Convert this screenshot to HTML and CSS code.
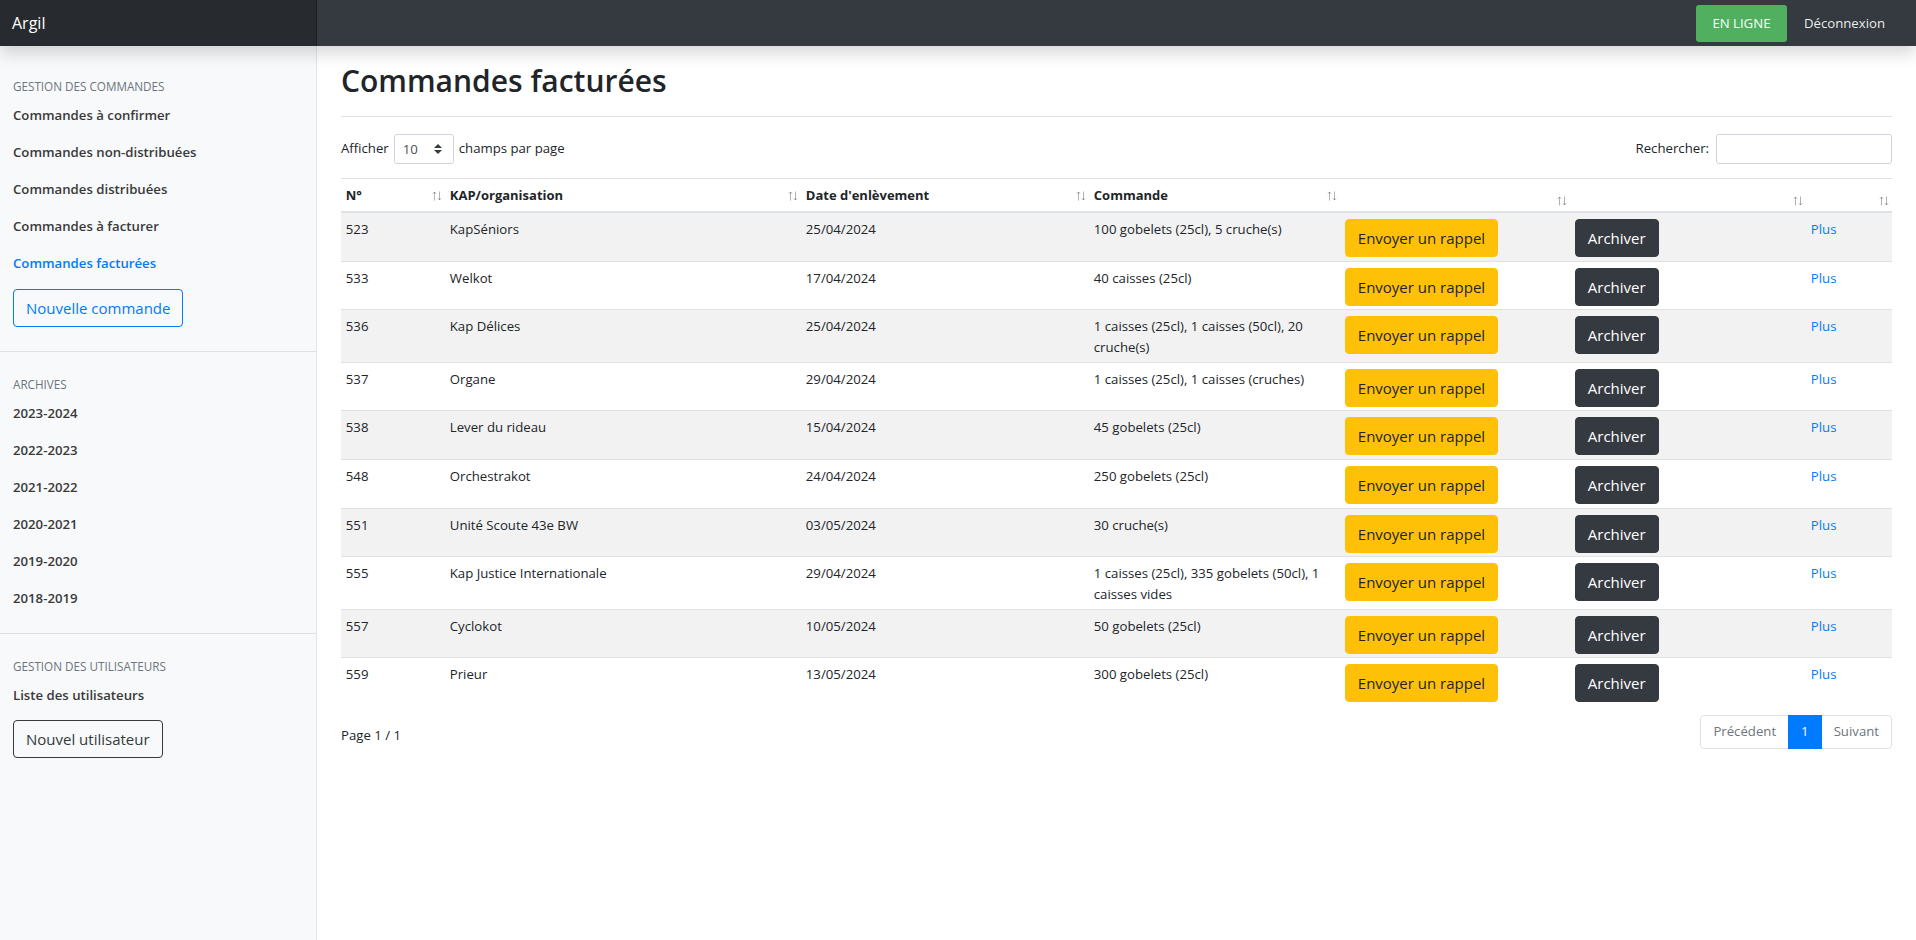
FILE: index.html
```html
<!DOCTYPE html>
<html lang="fr">
<head>
<meta charset="utf-8">
<title>Commandes facturées</title>
<link rel="stylesheet" href="styles.css">
</head>
<body>
<header class="topbar">
  <a class="brand" href="#">Argil</a>
  <div class="topbar-right">
    <span class="status">EN LIGNE</span>
    <a class="logout" href="#">Déconnexion</a>
  </div>
</header>
<div class="layout">
  <nav class="sidebar">
    <h6 class="side-heading first">Gestion des commandes</h6>
    <ul class="side-nav">
      <li><a class="side-link" href="#">Commandes à confirmer</a></li>
      <li><a class="side-link" href="#">Commandes non-distribuées</a></li>
      <li><a class="side-link" href="#">Commandes distribuées</a></li>
      <li><a class="side-link" href="#">Commandes à facturer</a></li>
      <li><a class="side-link active" href="#">Commandes facturées</a></li>
    </ul>
    <button class="btn btn-outline-primary side-btn" type="button">Nouvelle commande</button>
    <div class="side-divider"></div>
    <h6 class="side-heading">Archives</h6>
    <ul class="side-nav">
      <li><a class="side-link" href="#">2023-2024</a></li>
      <li><a class="side-link" href="#">2022-2023</a></li>
      <li><a class="side-link" href="#">2021-2022</a></li>
      <li><a class="side-link" href="#">2020-2021</a></li>
      <li><a class="side-link" href="#">2019-2020</a></li>
      <li><a class="side-link" href="#">2018-2019</a></li>
    </ul>
    <div class="side-divider second"></div>
    <h6 class="side-heading third">Gestion des utilisateurs</h6>
    <ul class="side-nav">
      <li><a class="side-link" href="#">Liste des utilisateurs</a></li>
    </ul>
    <button class="btn btn-outline-dark side-btn small-gap" type="button">Nouvel utilisateur</button>
  </nav>

  <main class="main">
    <div class="page-head">
      <h1 class="page-title">Commandes facturées</h1>
    </div>

    <div class="table-tools">
      <label class="length">Afficher
        <span class="select-wrap">
          <select class="length-select"><option>10</option><option>25</option><option>50</option><option>100</option></select>
          <svg class="select-caret" width="8" height="10" viewBox="0 0 8 10"><path d="M4 0 L8 4 H0 Z M0 6 H8 L4 10 Z" fill="#343a40"/></svg>
        </span>
        champs par page</label>
      <label class="search">Rechercher:<input class="search-input" type="search"></label>
    </div>

    <table class="orders">
      <colgroup>
        <col class="c-num"><col class="c-org"><col class="c-date"><col class="c-cmd"><col class="c-remind"><col class="c-archive"><col class="c-more">
      </colgroup>
      <thead>
        <tr>
          <th><div class="th-in"><span>N°</span><svg class="sort" width="10" height="10" viewBox="0 0 10 10"><path d="M2.5 9.5V1 M0.8 2.8 L2.5 1 L4.2 2.8 M7.5 0.5V9 M5.8 7.2 L7.5 9 L9.2 7.2" fill="none" stroke="#000" stroke-opacity="0.3" stroke-width="1"/></svg></div></th>
          <th><div class="th-in"><span>KAP/organisation</span><svg class="sort" width="10" height="10" viewBox="0 0 10 10"><path d="M2.5 9.5V1 M0.8 2.8 L2.5 1 L4.2 2.8 M7.5 0.5V9 M5.8 7.2 L7.5 9 L9.2 7.2" fill="none" stroke="#000" stroke-opacity="0.3" stroke-width="1"/></svg></div></th>
          <th><div class="th-in"><span>Date d'enlèvement</span><svg class="sort" width="10" height="10" viewBox="0 0 10 10"><path d="M2.5 9.5V1 M0.8 2.8 L2.5 1 L4.2 2.8 M7.5 0.5V9 M5.8 7.2 L7.5 9 L9.2 7.2" fill="none" stroke="#000" stroke-opacity="0.3" stroke-width="1"/></svg></div></th>
          <th><div class="th-in"><span>Commande</span><svg class="sort" width="10" height="10" viewBox="0 0 10 10"><path d="M2.5 9.5V1 M0.8 2.8 L2.5 1 L4.2 2.8 M7.5 0.5V9 M5.8 7.2 L7.5 9 L9.2 7.2" fill="none" stroke="#000" stroke-opacity="0.3" stroke-width="1"/></svg></div></th>
          <th><div class="th-in"><span></span><svg class="sort" width="10" height="10" viewBox="0 0 10 10"><path d="M2.5 9.5V1 M0.8 2.8 L2.5 1 L4.2 2.8 M7.5 0.5V9 M5.8 7.2 L7.5 9 L9.2 7.2" fill="none" stroke="#000" stroke-opacity="0.3" stroke-width="1"/></svg></div></th>
          <th><div class="th-in"><span></span><svg class="sort" width="10" height="10" viewBox="0 0 10 10"><path d="M2.5 9.5V1 M0.8 2.8 L2.5 1 L4.2 2.8 M7.5 0.5V9 M5.8 7.2 L7.5 9 L9.2 7.2" fill="none" stroke="#000" stroke-opacity="0.3" stroke-width="1"/></svg></div></th>
          <th><div class="th-in"><span></span><svg class="sort" width="10" height="10" viewBox="0 0 10 10"><path d="M2.5 9.5V1 M0.8 2.8 L2.5 1 L4.2 2.8 M7.5 0.5V9 M5.8 7.2 L7.5 9 L9.2 7.2" fill="none" stroke="#000" stroke-opacity="0.3" stroke-width="1"/></svg></div></th>
        </tr>
      </thead>
      <tbody>
        <tr><td>523</td><td>KapSéniors</td><td>25/04/2024</td><td>100 gobelets (25cl), 5 cruche(s)</td><td><button class="btn btn-warning" type="button">Envoyer un rappel</button></td><td><button class="btn btn-dark" type="button">Archiver</button></td><td><a class="more" href="#">Plus</a></td></tr>
        <tr><td>533</td><td>Welkot</td><td>17/04/2024</td><td>40 caisses (25cl)</td><td><button class="btn btn-warning" type="button">Envoyer un rappel</button></td><td><button class="btn btn-dark" type="button">Archiver</button></td><td><a class="more" href="#">Plus</a></td></tr>
        <tr><td>536</td><td>Kap Délices</td><td>25/04/2024</td><td>1 caisses (25cl), 1 caisses (50cl), 20 cruche(s)</td><td><button class="btn btn-warning" type="button">Envoyer un rappel</button></td><td><button class="btn btn-dark" type="button">Archiver</button></td><td><a class="more" href="#">Plus</a></td></tr>
        <tr><td>537</td><td>Organe</td><td>29/04/2024</td><td>1 caisses (25cl), 1 caisses (cruches)</td><td><button class="btn btn-warning" type="button">Envoyer un rappel</button></td><td><button class="btn btn-dark" type="button">Archiver</button></td><td><a class="more" href="#">Plus</a></td></tr>
        <tr><td>538</td><td>Lever du rideau</td><td>15/04/2024</td><td>45 gobelets (25cl)</td><td><button class="btn btn-warning" type="button">Envoyer un rappel</button></td><td><button class="btn btn-dark" type="button">Archiver</button></td><td><a class="more" href="#">Plus</a></td></tr>
        <tr><td>548</td><td>Orchestrakot</td><td>24/04/2024</td><td>250 gobelets (25cl)</td><td><button class="btn btn-warning" type="button">Envoyer un rappel</button></td><td><button class="btn btn-dark" type="button">Archiver</button></td><td><a class="more" href="#">Plus</a></td></tr>
        <tr><td>551</td><td>Unité Scoute 43e BW</td><td>03/05/2024</td><td>30 cruche(s)</td><td><button class="btn btn-warning" type="button">Envoyer un rappel</button></td><td><button class="btn btn-dark" type="button">Archiver</button></td><td><a class="more" href="#">Plus</a></td></tr>
        <tr><td>555</td><td>Kap Justice Internationale</td><td>29/04/2024</td><td>1 caisses (25cl), 335 gobelets (50cl), 1 caisses vides</td><td><button class="btn btn-warning" type="button">Envoyer un rappel</button></td><td><button class="btn btn-dark" type="button">Archiver</button></td><td><a class="more" href="#">Plus</a></td></tr>
        <tr><td>557</td><td>Cyclokot</td><td>10/05/2024</td><td>50 gobelets (25cl)</td><td><button class="btn btn-warning" type="button">Envoyer un rappel</button></td><td><button class="btn btn-dark" type="button">Archiver</button></td><td><a class="more" href="#">Plus</a></td></tr>
        <tr><td>559</td><td>Prieur</td><td>13/05/2024</td><td>300 gobelets (25cl)</td><td><button class="btn btn-warning" type="button">Envoyer un rappel</button></td><td><button class="btn btn-dark" type="button">Archiver</button></td><td><a class="more" href="#">Plus</a></td></tr>
      </tbody>
    </table>

    <div class="table-foot">
      <div class="info">Page 1 / 1</div>
      <ul class="pagination">
        <li class="page-item disabled"><a class="page-link" href="#">Précédent</a></li>
        <li class="page-item active"><a class="page-link" href="#">1</a></li>
        <li class="page-item disabled"><a class="page-link" href="#">Suivant</a></li>
      </ul>
    </div>
  </main>
</div>
</body>
</html>
```

FILE: styles.css
```css
* { box-sizing: border-box; }

html, body {
  margin: 0;
  padding: 0;
}

body {
  font-family: "Open Sans", "Noto Sans", "DejaVu Sans", sans-serif;
  font-size: 13.2px;
  line-height: 21px;
  color: #212529;
  background: #fff;
}

a { text-decoration: none; }

/* ---------- top bar ---------- */
.topbar {
  position: relative;
  z-index: 2;
  display: flex;
  align-items: center;
  height: 46px;
  background: #343a40;
  box-shadow: 0 8px 16px rgba(0, 0, 0, 0.15);
}

.brand {
  width: 317px;
  height: 46px;
  padding: 0 12px;
  line-height: 46px;
  font-size: 16px;
  color: #fff;
  background: rgba(0, 0, 0, 0.25);
  box-shadow: inset -1px 0 0 rgba(0, 0, 0, 0.25);
}

.topbar-right {
  margin-left: auto;
  display: flex;
  align-items: center;
}

.status {
  width: 91px;
  height: 37px;
  line-height: 37px;
  text-align: center;
  color: #fff;
  background: #50b05f;
  border-radius: 3px;
}

.logout {
  margin: 0 31px 0 17px;
  color: rgba(255, 255, 255, 0.92);
}

/* ---------- layout ---------- */
.layout {
  display: flex;
  min-height: calc(100vh - 46px);
}

/* ---------- sidebar ---------- */
.sidebar {
  flex: 0 0 317px;
  width: 317px;
  padding-top: 8px;
  background: #f8f9fa;
  border-right: 1px solid #e3e5e8;
}

.side-heading {
  margin: 25px 0 3px;
  padding: 0 13px;
  font-size: 11.7px;
  line-height: 14px;
  font-weight: 400;
  text-transform: uppercase;
  color: #6c757d;
}

.side-heading.third { margin-top: 25px; }

.side-nav {
  list-style: none;
  margin: 0;
  padding: 0;
}

.side-link {
  display: block;
  padding: 9px 13px 7px;
  line-height: 21px;
  font-weight: 600;
  color: #3a3a3a;
}

.side-link.active { color: #007bff; }

.side-btn {
  margin: 8px 0 0 13px;
}

.side-btn.small-gap { margin-top: 7px; }

.side-divider {
  margin-top: 24px;
  border-top: 1px solid #dee2e6;
}

.side-divider.second { margin-top: 17px; }

/* ---------- buttons ---------- */
.btn {
  display: inline-block;
  padding: 6px 12px;
  font-family: inherit;
  font-size: 15px;
  line-height: 24px;
  font-weight: 400;
  border: 1px solid transparent;
  border-radius: 4px;
  background: transparent;
  cursor: pointer;
  white-space: nowrap;
}

.btn-outline-primary { color: #007bff; border-color: #007bff; }
.btn-outline-dark { color: #343a40; border-color: #343a40; }
.btn-warning { color: #212529; background: #ffc107; border-color: #ffc107; }
.btn-dark { color: #fff; background: #343a40; border-color: #343a40; }

/* ---------- main ---------- */
.main {
  flex: 1;
  min-width: 0;
  padding: 0 24px;
}

.page-head {
  padding: 16px 0 8px;
  margin-bottom: 16px;
  border-bottom: 1px solid #dee2e6;
}

.page-title {
  margin: 0 0 8px;
  font-size: 30px;
  line-height: 38.4px;
  font-weight: 600;
  color: #212529;
}

.table-tools {
  display: flex;
  justify-content: space-between;
  align-items: center;
  height: 31px;
}

.length, .search {
  display: flex;
  align-items: center;
  white-space: nowrap;
}

.select-wrap {
  position: relative;
  display: inline-block;
  margin: 0 5px;
}

.length-select {
  display: block;
  width: 60px;
  height: 30px;
  padding: 0 8px;
  font-family: inherit;
  font-size: 13.2px;
  color: #495057;
  background: #fff;
  border: 1px solid #ced4da;
  border-radius: 3px;
  appearance: none;
  -webkit-appearance: none;
}

.select-caret {
  position: absolute;
  right: 12px;
  top: 10px;
  pointer-events: none;
}

.search-input {
  width: 176px;
  height: 30px;
  margin-left: 7px;
  padding: 4px 8px;
  font-family: inherit;
  font-size: 13.2px;
  border: 1px solid #ced4da;
  border-radius: 3px;
}

/* ---------- table ---------- */
.orders {
  width: 100%;
  margin-top: 14px;
  border-collapse: collapse;
  table-layout: fixed;
}

.c-num { width: 104px; }
.c-org { width: 356px; }
.c-date { width: 288px; }
.c-cmd { width: 251px; }
.c-remind { width: 230px; }
.c-archive { width: 236px; }
.c-more { width: 86px; }

.orders th {
  padding: 5.8px 3px 4.8px 4.8px;
  text-align: left;
  font-weight: 700;
  font-size: 13px;
  line-height: 21px;
  border-top: 1px solid #dee2e6;
  border-bottom: 2px solid #dee2e6;
  vertical-align: bottom;
}

.th-in {
  display: flex;
  align-items: center;
  justify-content: space-between;
}

.sort { flex: 0 0 auto; }

.orders td {
  padding: 6px 4.8px 3.6px;
  vertical-align: top;
  border-top: 1px solid #dee2e6;
}

.orders tbody tr:nth-child(odd) { background: #f2f2f2; }

.more { color: #007bff; }

/* ---------- footer ---------- */
.table-foot {
  display: flex;
  justify-content: space-between;
  align-items: flex-start;
  margin-top: 9px;
}

.info {
  padding-top: 10.5px;
}

.pagination {
  display: flex;
  list-style: none;
  margin: 0;
  padding: 0;
}

.page-link {
  display: block;
  margin-left: -1px;
  padding: 7.5px 12px;
  line-height: 17px;
  color: #007bff;
  background: #fff;
  border: 1px solid #dee2e6;
}

.page-item:first-child .page-link {
  margin-left: 0;
  border-radius: 4px 0 0 4px;
}

.page-item:last-child .page-link { border-radius: 0 4px 4px 0; }

.page-item.disabled .page-link { color: #6c757d; }

.page-item.active .page-link {
  position: relative;
  z-index: 1;
  color: #fff;
  background: #007bff;
  border-color: #007bff;
}
```
